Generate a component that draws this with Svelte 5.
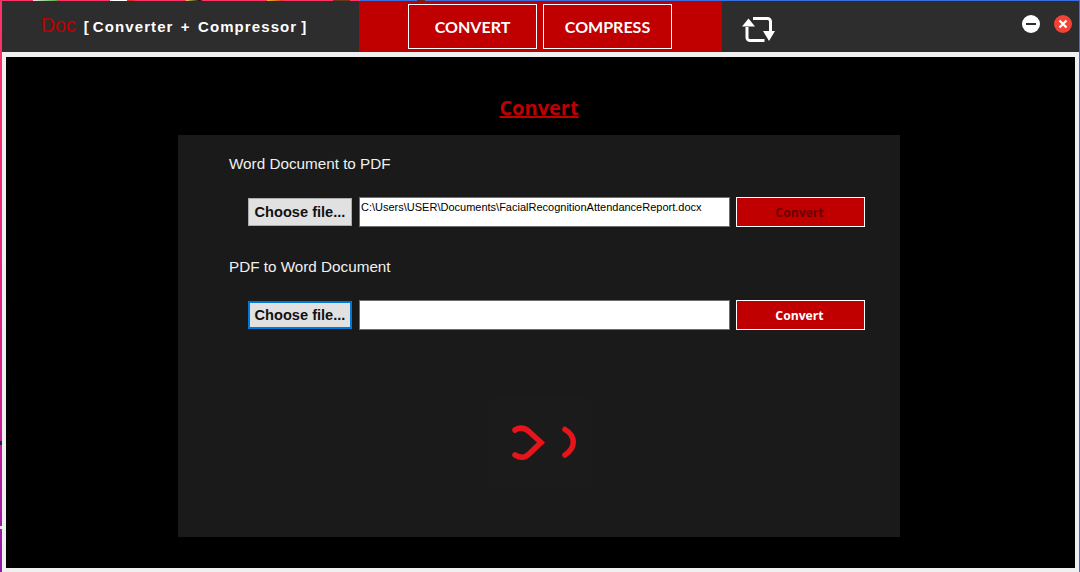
<script>
  const rows = [
    { label: 'Word Document to PDF', path: 'C:\\Users\\USER\\Documents\\FacialRecognitionAttendanceReport.docx', busy: true },
    { label: 'PDF to Word Document', path: '', busy: false }
  ];
</script>

<div class="window">
  <header class="titlebar">
    <div class="brand"><span class="doc">Doc</span><span class="tag"><span class="open">[</span>Converter + Compressor<span class="shut">]</span></span></div>
    <nav class="tabs">
      <button class="tab">CONVERT</button>
      <button class="tab">COMPRESS</button>
    </nav>
    <div class="tools">
      <svg class="swap" width="34" height="27" viewBox="0 0 34 27">
        <path d="M11 2.5H25.5a3 3 0 0 1 3 3V15M22.5 24.5H8a3 3 0 0 1-3-3V11" fill="none" stroke="#fff" stroke-width="3"/>
        <path d="M0 10.5L6.5 2.5L13 10.5ZM21 15L33 15L27 25Z" fill="#fff"/>
      </svg>
      <div class="winbtns">
        <span class="wb min"><i></i></span>
        <span class="wb close">
          <svg width="10" height="10" viewBox="0 0 10 10"><path d="M1.5 1.5L8.5 8.5M8.5 1.5L1.5 8.5" stroke="#fff" stroke-width="2.2"/></svg>
        </span>
      </div>
    </div>
  </header>

  <main class="client">
    <div class="canvas">
      <h1>Convert</h1>
      <section class="panel">
        {#each rows as row, i}
          <div class="block">
            <div class="label">{row.label}</div>
            <div class="row">
              <button class="choose" class:focus={i === 1}>Choose file...</button>
              <div class="path">{row.path}</div>
              <button class="go" class:busy={row.busy}>Convert</button>
            </div>
          </div>
        {/each}
        <div class="loader">
          <svg width="90" height="90" viewBox="0 0 90 90">
            <path d="M20 33C26 29.500 30 31 34 34.500L46 45.500L34 57C30 61 26 61.500 20 58" fill="none" stroke="#e8141c" stroke-width="5.500" stroke-linecap="round"/>
            <path d="M70 32.500C81 39 81 51 70 58" fill="none" stroke="#e8141c" stroke-width="5.500" stroke-linecap="round"/>
          </svg>
        </div>
      </section>
    </div>
  </main>
</div>

<style>
  :global(body) { margin: 0; background: #f0f0f0; }
  .window {
    width: 1080px; height: 572px; box-sizing: border-box;
    display: flex; flex-direction: column;
    border-top: 1px solid #3a6fe0;
    border-right: 1px solid #3a6fe0;
    border-left: 2px solid #e0207a;
    font-family: "Liberation Sans", Arial, sans-serif;
    position: relative;
  }
  .window::before {
    content: ""; position: absolute; left: -2px; top: -1px; bottom: 0; width: 2px;
    background:
      linear-gradient(transparent 441px, #20203a 441px, #20203a 445px, transparent 445px, transparent 526px, #e8e8e8 526px, #e8e8e8 529px, transparent 529px),
      linear-gradient(#ff3366, #d0208c 70%, #8a1aa8);
  }
  .window::after {
    content: ""; position: absolute; left: -2px; top: -1px; width: 427px; height: 1px;
    background: linear-gradient(90deg,
      #ff3366 33px, #e8e8e8 33px, #5fae4a 57px, #ff3366 57px,
      #ff3366 110px, #ffffff 110px, #ffffff 127px, #d8362a 127px, #d8362a 135px, #ff3366 135px,
      #ff3366 186px, #e8d060 186px, #111 200px, #ff3366 203px,
      #ff3366 267px, #e8c020 267px, #d8362a 283px, #ff3366 283px,
      #ff3366 333px, #6a3a18 333px, #6a3a18 350px, #ff3366 350px,
      #ff3366 360px, #3a6fe0 360px, #3a6fe0 417px, #5a3020 417px, #5a3020 425px, #3a6fe0 425px);
  }
  .titlebar { height: 51px; flex: none; display: flex; background: #2d2d2d; }
  .brand { width: 357px; flex: none; display: flex; align-items: center; box-sizing: border-box; padding-left: 39px; padding-bottom: 0; }
  .doc { color: #c00000; font-size: 19.500px; margin-right: 8px; position: relative; top: -1px; }
  .tag { color: #fff; font-size: 15px; font-weight: 700; letter-spacing: 1.1px; word-spacing: 2px; }
  .open { margin-right: 3px; }
  .shut { margin-left: 4px; }
  .tabs { width: 363px; flex: none; background: #c00000; box-sizing: border-box; padding: 3px 0 0 49px; display: flex; gap: 6px; align-items: flex-start; }
  .tab {
    width: 129px; height: 45px; background: #c00000; color: #fff;
    border: 1px solid #fff; font: 700 16px Lato, sans-serif; padding: 0;
  }
  .tools { flex: 1; position: relative; display: flex; }
  .swap { margin: 15px 0 0 20px; }
  .winbtns { margin-left: auto; display: flex; gap: 14px; padding: 14px 7px 0 0; }
  .wb { width: 18px; height: 18px; border-radius: 50%; display: flex; align-items: center; justify-content: center; }
  .min { background: #fff; }
  .min i { width: 10px; height: 2px; background: #2d2d2d; display: block; }
  .close { background: #f44336; }
  .client { flex: 1; min-height: 0; background: #f0f0f0; padding: 5px 4px 4px 4px; display: flex; }
  .canvas { flex: 1; background: #000; display: flex; flex-direction: column; align-items: center; padding-right: 3px; }
  h1 {
    margin: 37px 0 0; height: 41px; box-sizing: border-box;
    font: 700 20px/28px "Open Sans", sans-serif; color: #c00000; text-decoration: underline;
  }
  .panel { width: 722px; height: 402px; background: #1a1a1a; box-sizing: border-box; padding-top: 19px; }
  .block { height: 103px; }
  .label { color: #f0f0f0; font-size: 15.250px; line-height: 20px; margin-left: 51px; }
  .row { display: flex; align-items: center; margin: 23px 0 0 70px; height: 30px; }
  .choose {
    width: 104px; height: 28px; padding: 0; background: #e1e1e1; color: #111;
    border: 1px solid #adadad; font: 700 14.600px "Liberation Sans", Arial, sans-serif;
  }
  .choose.focus { border: 2px solid #0078d7; }
  .path {
    width: 371px; height: 30px; margin-left: 7px; box-sizing: border-box;
    background: #fff; border: 1px solid #6e6e6e; color: #000;
    font-size: 11px; line-height: 15px; padding: 2px 0 0 1px; white-space: nowrap;
  }
  .go {
    width: 129px; height: 30px; margin-left: 6px; padding: 0 2px 0 0; background: #c00000; color: #fff;
    border: 1px solid #fff; font: 700 12.200px "Open Sans", sans-serif;
  }
  .go.busy { color: #6a0000; }
  .loader { width: 90px; height: 90px; background: #1b1b1b; margin: 37px 0 0 317px; }
</style>
